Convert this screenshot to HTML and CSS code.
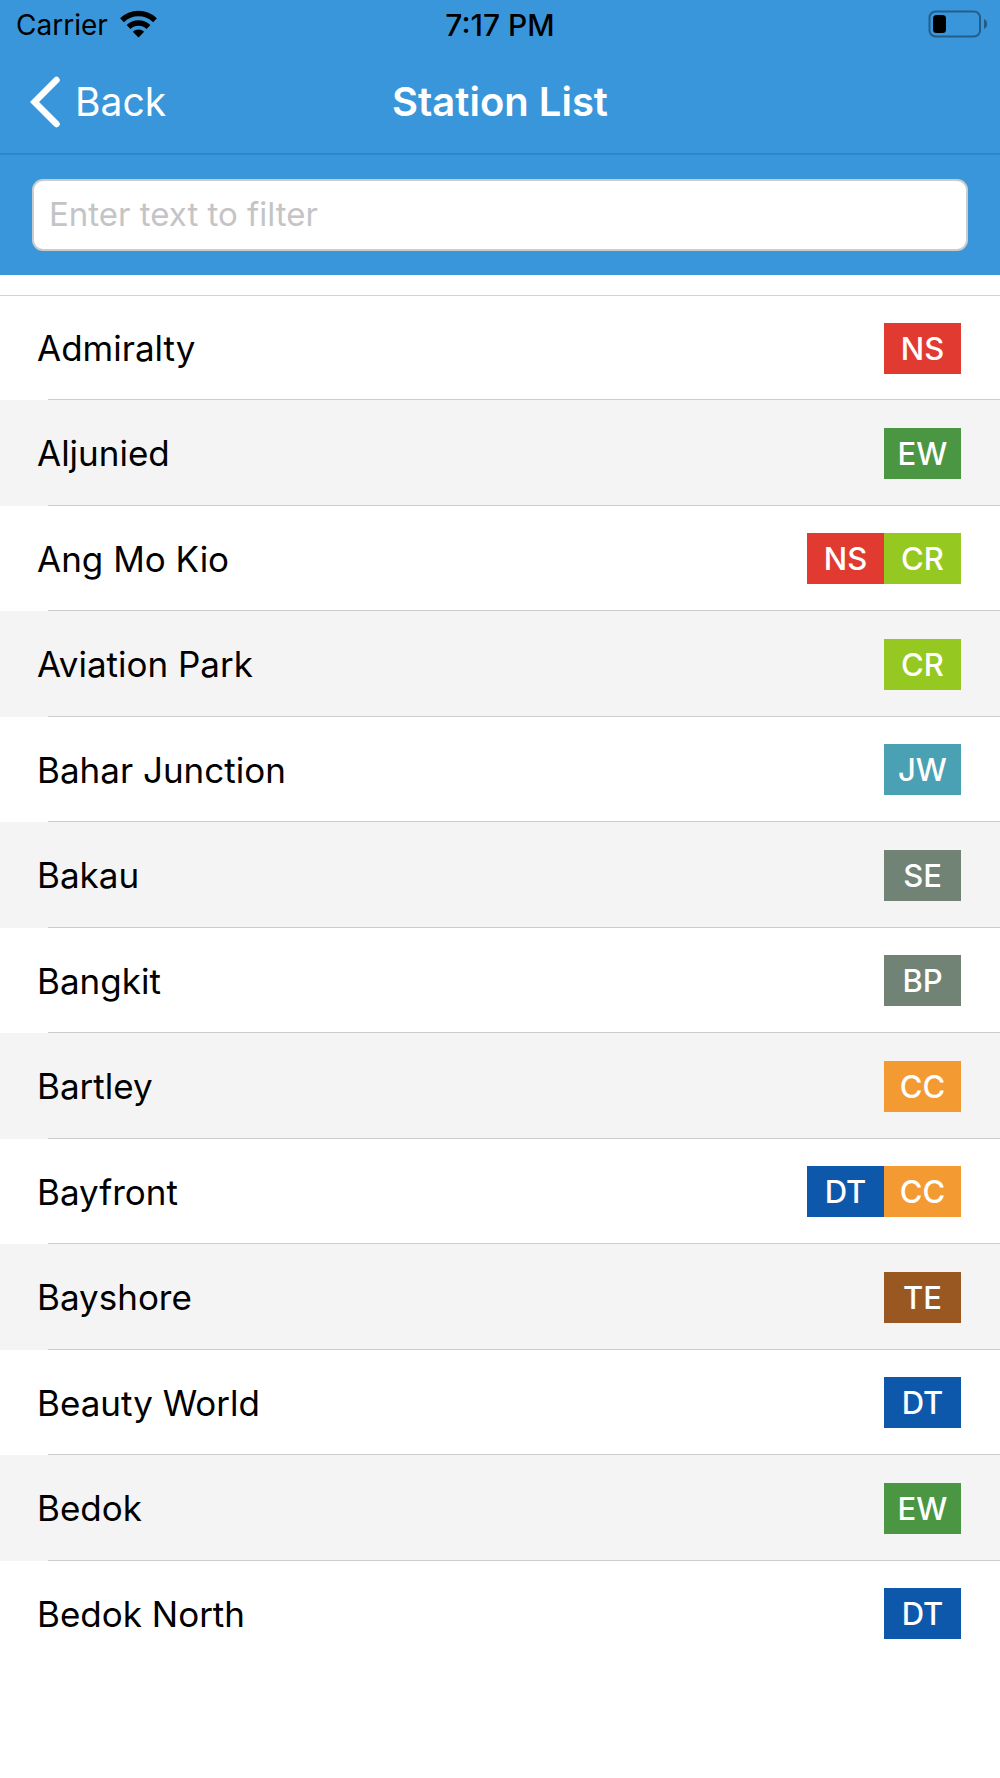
FILE: index.html
```html
<!DOCTYPE html>
<html lang="en">
<head>
<meta charset="utf-8">
<meta name="viewport" content="width=device-width, initial-scale=1">
<title>Station List</title>
<link rel="stylesheet" href="styles.css">
</head>
<body>
<header class="header">
  <div class="status-bar">
    <div class="carrier">
      <span>Carrier</span>
      <svg class="wifi" viewBox="0 0 37 28" width="37" height="28" aria-hidden="true">
        <g fill="none" stroke="#000" stroke-width="5.5">
          <path d="M2 10.200A23.500 23.500 0 0 1 35 10.200"/>
          <path d="M8.500 17A14.300 14.300 0 0 1 28.500 17"/>
        </g>
        <path d="M18.500 27.500L12.800 21.800A8.200 8.200 0 0 1 24.200 21.800Z"/>
      </svg>
    </div>
    <time class="clock">7:17 PM</time>
    <svg class="battery" viewBox="0 0 60 28" width="60" height="28" aria-label="Battery low">
      <rect x="1.500" y="1.500" width="50.500" height="25" rx="6" fill="none" stroke="#235e8a" stroke-width="2"/>
      <rect x="5" y="5" width="13" height="18" rx="3.500"/>
      <path d="M56 9v10a5.500 5.500 0 0 0 0-10z" fill="#235e8a"/>
    </svg>
  </div>
  <nav class="nav-bar">
    <a class="back" href="#">
      <svg viewBox="0 0 30 52" width="30" height="52" aria-hidden="true">
        <path d="M26.500 4L4.500 26L26.500 48" fill="none" stroke="#fff" stroke-width="6.500" stroke-linecap="round"/>
      </svg>
      <span>Back</span>
    </a>
    <h1 class="title">Station List</h1>
  </nav>
  <form class="search">
    <input class="filter" type="text" placeholder="Enter text to filter" aria-label="Filter stations">
  </form>
</header>
<main>
  <ul class="stations">
    <li class="station"><span>Admiralty</span><span class="lines"><b class="line ns">NS</b></span></li>
    <li class="station"><span>Aljunied</span><span class="lines"><b class="line ew">EW</b></span></li>
    <li class="station"><span>Ang Mo Kio</span><span class="lines"><b class="line ns">NS</b><b class="line cr">CR</b></span></li>
    <li class="station"><span>Aviation Park</span><span class="lines"><b class="line cr">CR</b></span></li>
    <li class="station"><span>Bahar Junction</span><span class="lines"><b class="line jw">JW</b></span></li>
    <li class="station"><span>Bakau</span><span class="lines"><b class="line lrt">SE</b></span></li>
    <li class="station"><span>Bangkit</span><span class="lines"><b class="line lrt">BP</b></span></li>
    <li class="station"><span>Bartley</span><span class="lines"><b class="line cc">CC</b></span></li>
    <li class="station"><span>Bayfront</span><span class="lines"><b class="line dt">DT</b><b class="line cc">CC</b></span></li>
    <li class="station"><span>Bayshore</span><span class="lines"><b class="line te">TE</b></span></li>
    <li class="station"><span>Beauty World</span><span class="lines"><b class="line dt">DT</b></span></li>
    <li class="station"><span>Bedok</span><span class="lines"><b class="line ew">EW</b></span></li>
    <li class="station"><span>Bedok North</span><span class="lines"><b class="line dt">DT</b></span></li>
  </ul>
</main>
</body>
</html>
```
FILE: styles.css
```css
* {
  box-sizing: border-box;
}

body {
  margin: 0;
  background: #fff;
  color: #000;
  font-family: Inter, "Liberation Sans", sans-serif;
}

.header {
  background: #3a96da;
}

.status-bar {
  display: grid;
  grid-template-columns: 1fr auto 1fr;
  align-items: center;
  height: 50px;
  padding: 0 12px;
  font-size: 28px;
  line-height: 50px;
}

.carrier {
  display: flex;
  align-items: center;
  gap: 12px;
  padding-left: 4px;
}

.wifi {
  margin-bottom: 3px;
}

.clock {
  font-size: 30px;
  font-weight: 500;
}

.battery {
  justify-self: end;
  margin-bottom: 2px;
}

.nav-bar {
  display: grid;
  grid-template-columns: 1fr auto 1fr;
  align-items: center;
  height: 105px;
  padding: 0 30px;
  border-bottom: 2px solid #2f86c6;
  color: #fff;
  font-size: 39px;
}

.back {
  display: flex;
  align-items: center;
  gap: 15px;
  color: inherit;
  text-decoration: none;
}

.title {
  margin: 0;
  font-size: 40px;
  font-weight: 600;
}

.search {
  padding: 24px 32px;
}

.filter {
  display: block;
  width: 100%;
  height: 72px;
  padding: 0 15px 2px;
  border: 2px solid #ccc;
  border-radius: 11px;
  background: #fff;
  color: #000;
  font: inherit;
  font-size: 33px;
  outline: none;
}

.filter::placeholder {
  color: #c4c4c6;
  opacity: 1;
}

.stations {
  margin: 20px 0 0;
  padding: 0;
  list-style: none;
}

.station {
  display: flex;
  align-items: center;
  justify-content: space-between;
  height: 105px;
  padding: 0 39px 0 37px;
  background: linear-gradient(#ccc, #ccc) 48px 100% / 100% 1px no-repeat;
  font-size: 35px;
}

.station:nth-child(even) {
  height: 106px;
  background-color: #f4f4f4;
}

.station:first-child {
  border-top: 1px solid #d2d2d2;
}

.station:last-child {
  background: none;
}

.lines {
  display: flex;
}

.line {
  width: 77px;
  font-size: 31px;
  font-weight: 500;
  line-height: 51px;
  color: #fff;
  text-align: center;
}

.ns { background: #e13b31; }
.ew { background: #4b9643; }
.cr { background: #95c921; }
.jw { background: #49a1b3; }
.lrt { background: #708375; }
.cc { background: #f39a33; }
.dt { background: #0d58ab; }
.te { background: #995821; }
```
